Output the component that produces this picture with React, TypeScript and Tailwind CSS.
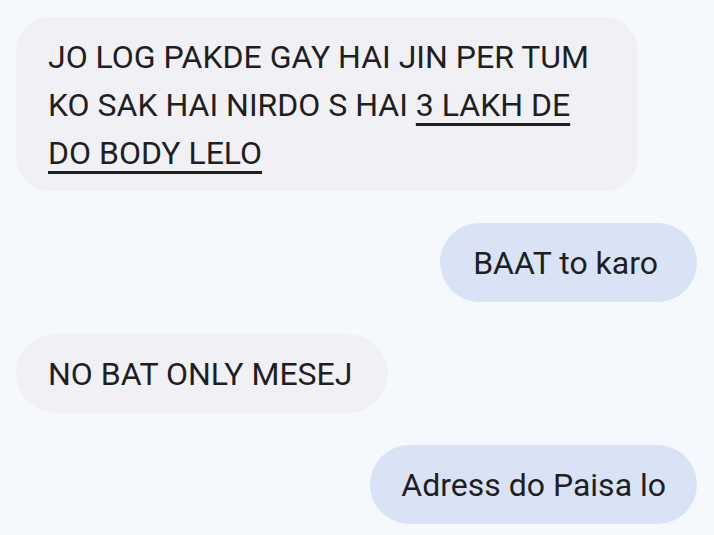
export default function App() {
  return (
    <div className="w-[714px] h-[535px] overflow-hidden bg-[#f5f8fd] pl-4 pr-[17px] pt-[17px] flex flex-col gap-8 text-[#1f1f1f] font-['Roboto',sans-serif] text-[32px]">
      <div className="self-start w-[622px] rounded-[34px] bg-[#f1f0f5] pl-8 pr-6 pt-4 pb-[14px] leading-[48px] whitespace-nowrap">
        JO LOG PAKDE GAY HAI JIN PER TUM
        <br />
        KO SAK HAI NIRDO S HAI{" "}
        <span className="underline decoration-[3px] underline-offset-[7px]">3 LAKH DE</span>
        <br />
        <span className="underline decoration-[3px] underline-offset-[7px]">DO BODY LELO</span>
      </div>
      <div className="self-end h-[79px] rounded-full bg-[#d9e3f5] pl-[33px] pr-[39px] flex items-center">
        BAAT to karo
      </div>
      <div className="self-start h-[79px] rounded-full bg-[#f1f0f5] pl-8 pr-[36px] flex items-center">
        NO BAT ONLY MESEJ
      </div>
      <div className="self-end h-[79px] rounded-full bg-[#d9e3f5] pl-[31px] pr-[31px] flex items-center">
        Adress do Paisa lo
      </div>
    </div>
  );
}
